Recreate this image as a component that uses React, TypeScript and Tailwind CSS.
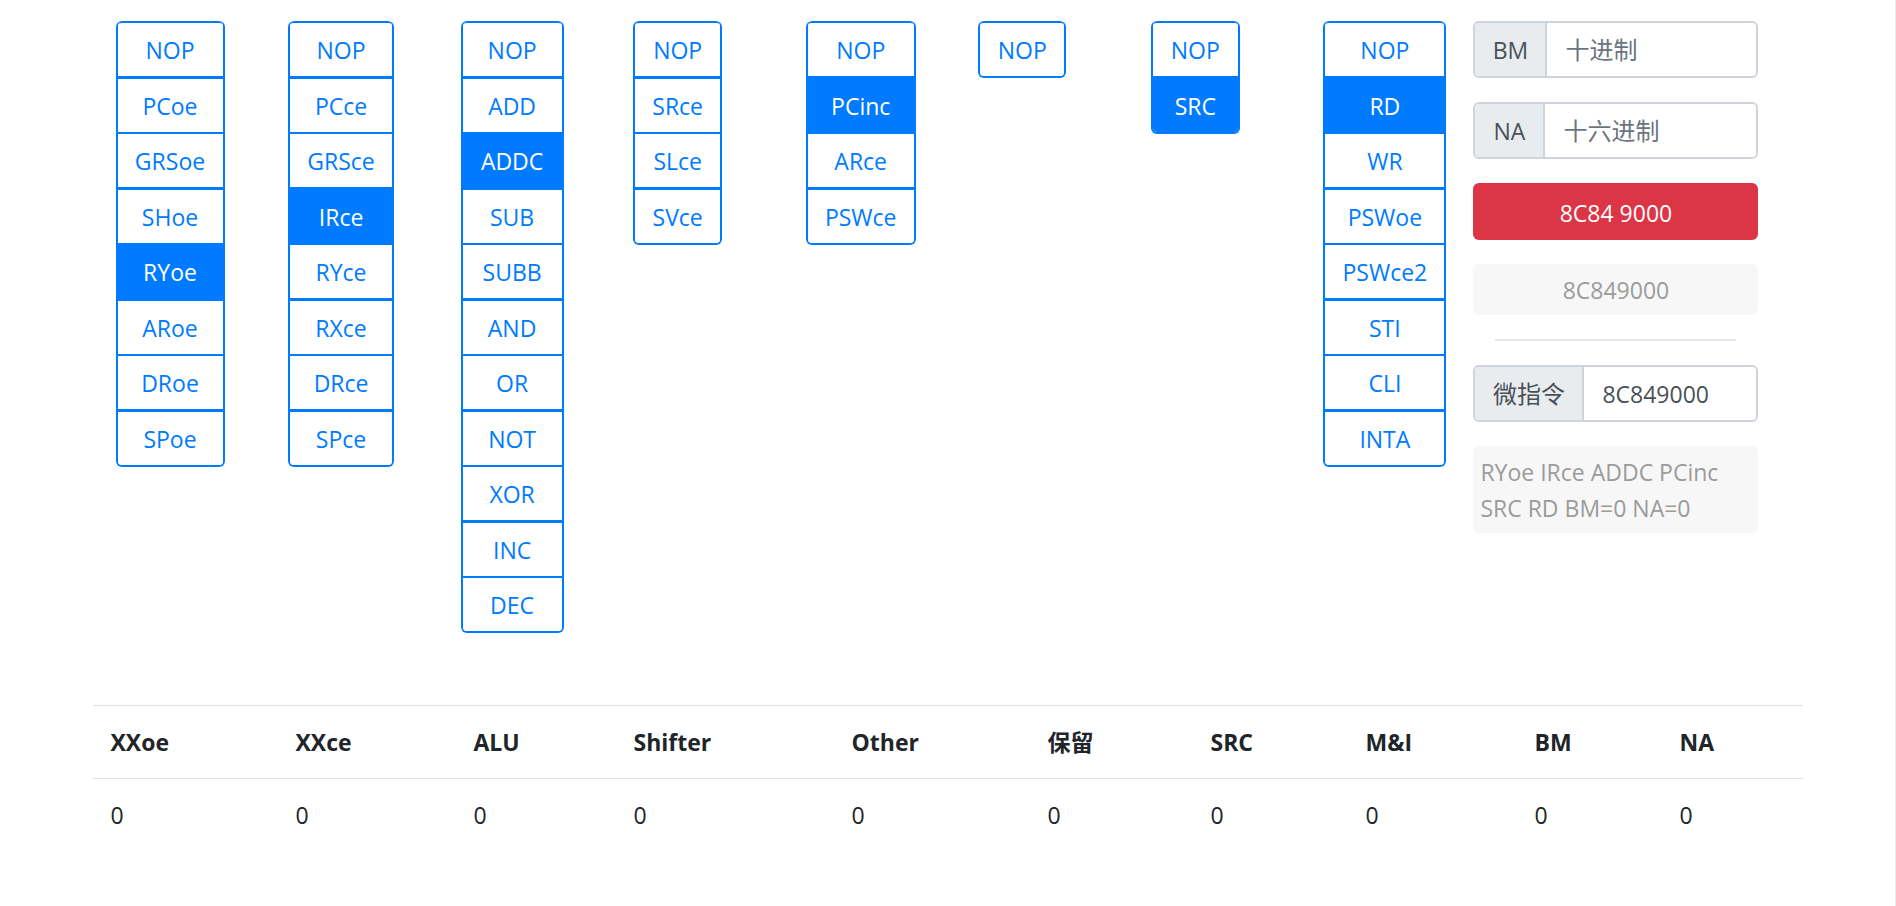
import { useState } from "react";

type Group = { name: string; width: string; options: string[]; initial: string };

const groups: Group[] = [
  { name: "XXoe", width: "w-[109px]", options: ["NOP", "PCoe", "GRSoe", "SHoe", "RYoe", "ARoe", "DRoe", "SPoe"], initial: "RYoe" },
  { name: "XXce", width: "w-[106px]", options: ["NOP", "PCce", "GRSce", "IRce", "RYce", "RXce", "DRce", "SPce"], initial: "IRce" },
  { name: "ALU", width: "w-[103px]", options: ["NOP", "ADD", "ADDC", "SUB", "SUBB", "AND", "OR", "NOT", "XOR", "INC", "DEC"], initial: "ADDC" },
  { name: "Shifter", width: "w-[89px]", options: ["NOP", "SRce", "SLce", "SVce"], initial: "" },
  { name: "Other", width: "w-[110px]", options: ["NOP", "PCinc", "ARce", "PSWce"], initial: "PCinc" },
  { name: "保留", width: "w-[88px]", options: ["NOP"], initial: "" },
  { name: "SRC", width: "w-[89px]", options: ["NOP", "SRC"], initial: "SRC" },
  { name: "M&I", width: "w-[123px]", options: ["NOP", "RD", "WR", "PSWoe", "PSWce2", "STI", "CLI", "INTA"], initial: "RD" },
];

const columns = [
  { title: "XXoe", width: "w-[185px]" },
  { title: "XXce", width: "w-[178px]" },
  { title: "ALU", width: "w-[160px]" },
  { title: "Shifter", width: "w-[218px]" },
  { title: "Other", width: "w-[196px]" },
  { title: "保留", width: "w-[163px]" },
  { title: "SRC", width: "w-[155px]" },
  { title: "M&I", width: "w-[169px]" },
  { title: "BM", width: "w-[145px]" },
  { title: "NA", width: "w-[141px]" },
];

function OptionGroup({ group }: { group: Group }) {
  const [selected, setSelected] = useState(group.initial);
  return (
    <div
      role="group"
      aria-label={group.name}
      className={`${group.width} flex flex-col self-start overflow-hidden rounded-md border-x-2 border-b-2 border-[#007bff]`}
    >
      {group.options.map((option, i) => (
        <button
          key={option}
          type="button"
          aria-pressed={option === selected}
          onClick={() => setSelected(option)}
          className={`${i === 0 ? "rounded-t-sm" : ""} ${i % 2 ? "border-t-3" : "border-t-2"} border-[#007bff] pt-[9px] pb-[8px] text-center whitespace-nowrap ${
            option === selected ? "bg-[#007bff] text-white" : "bg-white text-[#007bff]"
          }`}
        >
          {option}
        </button>
      ))}
    </div>
  );
}

function Field({ id, label, addon, placeholder, value }: { id: string; label: string; addon: string; placeholder?: string; value?: string }) {
  return (
    <div className="flex h-[57px] overflow-hidden rounded-md border-2 border-[#ced4da]">
      <label htmlFor={id} className={`${addon} shrink-0 border-r-2 border-[#ced4da] bg-[#e9ecef] pt-[9px] text-center text-[#495057]`}>
        {label}
      </label>
      <input
        id={id}
        type="text"
        placeholder={placeholder}
        defaultValue={value}
        className="min-w-0 flex-1 bg-white px-[18px] text-[#495057] outline-none placeholder:text-2xl placeholder:text-[#6c757d]"
      />
    </div>
  );
}

export default function App() {
  return (
    <div className="min-h-screen border-r border-[#ececec] bg-white font-['Open_Sans','Noto_Sans_CJK_SC',sans-serif] text-[23px] leading-9 text-[#212529]">
      <main className="mx-auto flex max-w-[1710px] flex-col gap-[72px] pt-[21px]">
        <section className="grid grid-cols-[repeat(7,minmax(0,23fr))_minmax(0,20fr)_minmax(0,38fr)] pr-[44px] pl-[23px]">
          {groups.map((group) => (
            <OptionGroup key={group.name} group={group} />
          ))}
          <div className="flex flex-col gap-6 self-start">
            <Field id="bm" label="BM" addon="w-[72px]" placeholder="十进制" />
            <Field id="na" label="NA" addon="w-[70px]" placeholder="十六进制" />
            <button type="button" className="h-[57px] rounded-md bg-[#dc3545] pt-[2px] text-center text-white">
              8C84 9000
            </button>
            <input
              type="text"
              disabled
              aria-label="Code"
              value="8C849000"
              className="h-[51px] w-full rounded-md bg-[#f7f7f7] pt-[1px] text-center text-[#9b9b9b]"
            />
            <hr className="mx-[22px] border-t-2 border-[#e8e8e8]" />
            <Field id="micro" label="微指令" addon="w-[109px] text-2xl leading-9" value="8C849000" />
            <textarea
              disabled
              aria-label="Decoded"
              value="RYoe IRce ADDC PCinc SRC RD BM=0 NA=0"
              className="h-[87px] w-full resize-none overflow-hidden rounded-md bg-[#f7f7f7] px-[7px] pt-[8px] pb-[6px] text-[#9b9b9b]"
            />
          </div>
        </section>
        <table className="w-full table-fixed border-collapse text-left">
          <thead>
            <tr className="border-t border-[#dee2e6]">
              {columns.map((c) => (
                <th key={c.title} scope="col" className={`${c.width} pt-[18px] pb-[18px] pl-[18px] font-bold`}>
                  {c.title}
                </th>
              ))}
            </tr>
          </thead>
          <tbody>
            <tr className="border-t border-[#dee2e6]">
              {columns.map((c) => (
                <td key={c.title} className="pt-[18px] pb-[18px] pl-[18px]">
                  0
                </td>
              ))}
            </tr>
          </tbody>
        </table>
      </main>
    </div>
  );
}
